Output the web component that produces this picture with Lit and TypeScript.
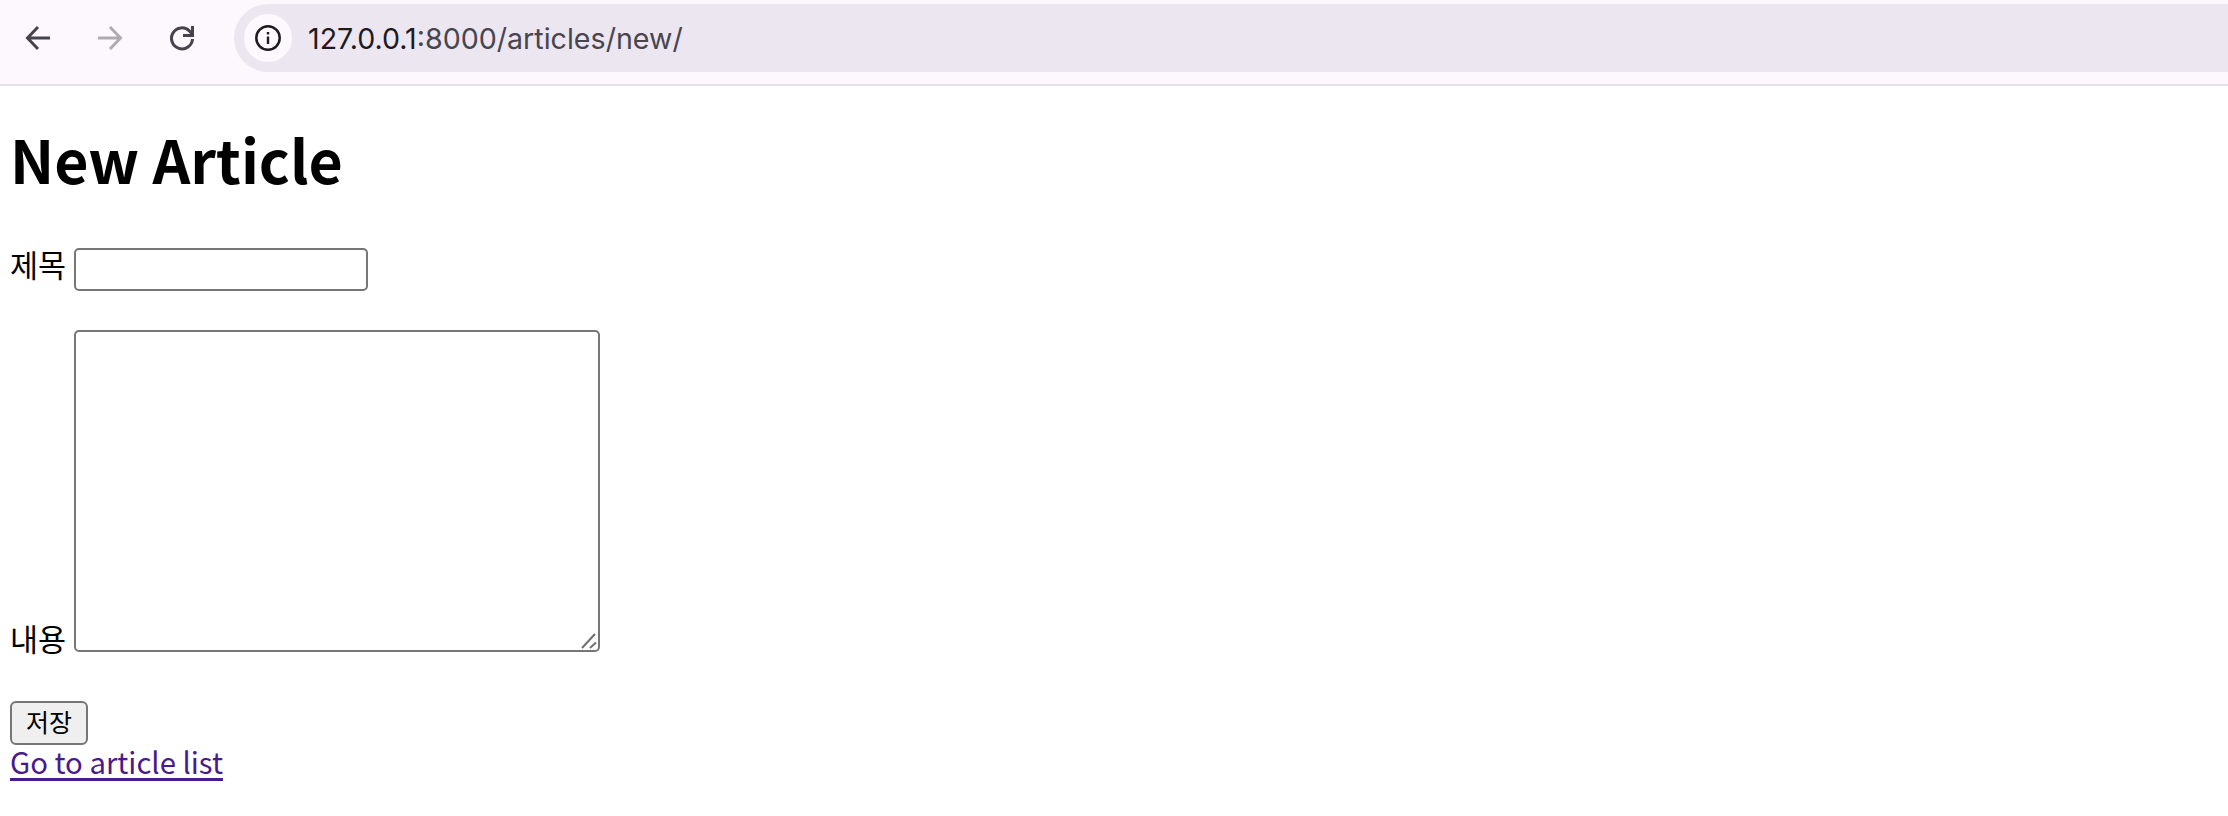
import { html, LitElement, css } from 'lit';
import { customElement } from 'lit/decorators.js';

@customElement('app-root')
export default class AppRoot extends LitElement {
  static styles = css`
    :host {
      display: block;
      min-height: 816px;
      background: #fff;
      color: #000;
      font-family: "Noto Sans CJK KR", "Noto Sans", sans-serif;
      font-size: 30px;
    }
    .toolbar {
      display: flex;
      box-sizing: border-box;
      height: 86px;
      padding: 4px 0 0 2px;
      background: #fdf8fe;
      border-bottom: 2px solid #e3deea;
    }
    .nav {
      display: flex;
      align-items: center;
      justify-content: center;
      flex: none;
      width: 72px;
      height: 68px;
    }
    .nav svg {
      width: 24px;
      height: 24px;
      overflow: visible;
      fill: none;
      stroke: #46434f;
      stroke-width: 3;
    }
    .nav.off svg {
      stroke: #aeabb3;
    }
    .omni {
      display: flex;
      align-items: center;
      flex: 1;
      height: 68px;
      margin-left: 16px;
      padding-left: 10px;
      background: #ece6f0;
      border-radius: 34px 0 0 34px;
      font-family: Inter, sans-serif;
      font-size: 28.6px;
      color: #48454f;
    }
    .info {
      display: flex;
      align-items: center;
      justify-content: center;
      width: 48px;
      height: 48px;
      margin-right: 16px;
      border-radius: 50%;
      background: #fdf8fe;
    }
    .info svg {
      width: 26px;
      height: 26px;
    }
    .host {
      color: #1d1b20;
    }
    main {
      padding: 0 10px;
    }
    h1 {
      margin: 0;
      padding-top: 29px;
      font-size: 59px;
      line-height: 87px;
      font-weight: 700;
    }
    .row {
      display: flex;
      gap: 8px;
    }
    .row label {
      font-size: 30.500px;
    }
    .title-row {
      margin-top: 46px;
    }
    .title-row label {
      line-height: 32px;
    }
    .body-row {
      align-items: flex-end;
      margin-top: 39px;
    }
    .body-row label {
      line-height: 40px;
      margin-bottom: -6px;
    }
    .area {
      position: relative;
      display: block;
    }
    .grip {
      position: absolute;
      right: 2px;
      bottom: 2px;
      width: 18px;
      height: 18px;
      fill: none;
      stroke: #707070;
      stroke-width: 2;
      pointer-events: none;
    }
    input, textarea {
      box-sizing: border-box;
      display: block;
      margin: 0;
      padding: 2px;
      border: 2px solid #767676;
      border-radius: 5px;
      background: #fff;
    }
    input {
      width: 294px;
      height: 43px;
    }
    textarea {
      width: 526px;
      height: 322px;
      resize: none;
    }
    button {
      display: block;
      box-sizing: border-box;
      width: 78px;
      height: 44px;
      margin: 49px 0 0;
      padding: 0 0 4px;
      border: 2px solid #767676;
      border-radius: 6px;
      background: #efefef;
      color: #000;
      font: inherit;
      font-size: 25px;
      line-height: 1;
    }
    a {
      display: block;
      width: fit-content;
      color: #4b1a8a;
      font-size: 29.300px;
      line-height: 32px;
      text-decoration-thickness: 3px;
      text-underline-offset: 4px;
    }
  `;

  render() {
    return html`
      <div class="toolbar">
        <div class="nav">
          <svg viewBox="0 0 24 24"><path d="M24 12H2M12 1 1.500 12 12 23" /></svg>
        </div>
        <div class="nav off">
          <svg viewBox="0 0 24 24"><path d="M0 12h22M12 1l10.500 11L12 23" /></svg>
        </div>
        <div class="nav">
          <svg viewBox="0 0 24 24"><path d="M22.500 13a10.500 10.500 0 1 1-3-8l3 3.500M22.500 0v9.500H13" /></svg>
        </div>
        <div class="omni">
          <div class="info">
            <svg viewBox="0 0 26 26">
              <circle cx="13" cy="13" r="11.700" fill="none" stroke="#1d1b20" stroke-width="2.500" />
              <path d="M13 11.500v7.500M13 7v2.500" fill="none" stroke="#1d1b20" stroke-width="2.400" />
            </svg>
          </div>
          <span><span class="host">127.0.0.1</span>:8000/articles/new/</span>
        </div>
      </div>
      <main>
        <h1>New Article</h1>
        <form>
          <div class="row title-row">
            <label>제목</label>
            <input type="text" />
          </div>
          <div class="row body-row">
            <label>내용</label>
            <div class="area">
              <textarea></textarea>
              <svg class="grip" viewBox="0 0 18 18"><path d="M2 16 15 2M10 16l6-5.500" /></svg>
            </div>
          </div>
          <button type="button">저장</button>
        </form>
        <a href="#">Go to article list</a>
      </main>
    `;
  }
}
